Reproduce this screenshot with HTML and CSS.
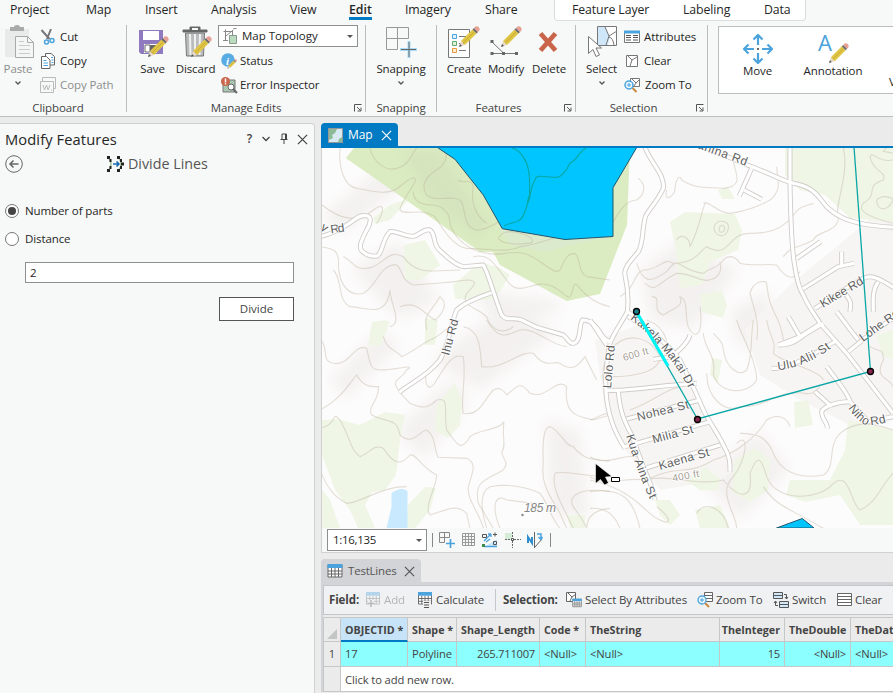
FILE: index.html
```html
<!DOCTYPE html>
<html lang="en">
<head>
<meta charset="utf-8">
<title>Modify Features</title>
<link rel="stylesheet" href="styles.css">
</head>
<body>
<svg class="sprite" aria-hidden="true">
  <defs>
    <symbol id="pencil" viewBox="0 0 22 22">
      <path d="M1 21l2-6 4 4z" fill="#e6d9cc"/><path d="M1 21l1-3 2 2z" fill="#555"/>
      <path d="M3 15L14.500 3.500l4 4L7 19z" fill="#dfc543"/><path d="M5 17L16.500 5.500" stroke="#c7ad38" stroke-width="1"/>
      <path d="M14.500 3.500l1.500-1.500 4 4-1.500 1.500z" fill="#6b6b6b"/><path d="M16 2l1.500-1.500q2-.8 3.300.7 1.400 1.500.6 3.200L20 6z" fill="#e8a094"/>
    </symbol>
    <symbol id="launcher" viewBox="0 0 8 8"><path d="M.5 7.500v-7h7M3 3l3.500 3.500M7 3.500V7H3.500" fill="none" stroke="#555"/></symbol>
    <symbol id="chev" viewBox="0 0 8 6"><path d="M1.500 1.500L4 4l2.500-2.500" fill="none" stroke="#555" stroke-width="1.300"/></symbol>
    <symbol id="x" viewBox="0 0 12 12"><path d="M1 1l10 10M11 1L1 11" fill="none" stroke="currentColor" stroke-width="1.300"/></symbol>
    <symbol id="tbl" viewBox="0 0 16 14"><path d="M1 1h14v12H1zM1 7h14M1 10h14M4.500 4v9M8 4v9M11.500 4v9" fill="#fff" stroke="#666"/><path d="M.5 0h15v4H.5z" fill="#4ba3de"/></symbol>
  </defs>
</svg>

<header class="ribbon">
  <nav class="tabs">
    <span>Project</span><span>Map</span><span>Insert</span><span>Analysis</span><span>View</span><span class="active"><b>Edit</b></span><span>Imagery</span><span>Share</span>
    <div class="context"><span>Feature Layer</span><span>Labeling</span><span>Data</span></div>
  </nav>
  <div class="groups">
    <section class="group clipboard">
      <div class="tools">
        <div class="big dim paste">
          <svg width="32" height="34" viewBox="0 0 32 34"><path d="M3 4h24v28H3z" fill="#e9ebea"/><path d="M8 2h4q0-2 3-2t3 2h4v4H8z" fill="#a9abab"/><path d="M13.500 11.500h12l6 6v15h-18z" fill="#f4f6f5" stroke="#a9abab"/><path d="M25.500 11.500v6h6" fill="none" stroke="#a9abab"/><path d="M17 16.500h5M17 20.500h11M17 24.500h11M17 28.500h11" stroke="#c9cccb"/></svg>
          <span>Paste</span><svg width="8" height="6"><use href="#chev"/></svg>
        </div>
        <div class="list">
          <div><svg width="16" height="16" viewBox="0 0 16 16"><path d="M1.500 1l8 9M11 0L7 10" stroke="#777" stroke-width="2"/><circle cx="6.500" cy="13" r="2" fill="none" stroke="#4ba3de" stroke-width="1.500"/><circle cx="12" cy="11.500" r="2" fill="none" stroke="#4ba3de" stroke-width="1.500"/></svg><span>Cut</span></div>
          <div><svg width="16" height="16" viewBox="0 0 16 16"><path d="M5.500.5H11l3.500 3v8.500h-9z" fill="#fff" stroke="#666"/><path d="M1.500 3.500h5l3.500 3.500v8.500H1.500z" fill="#fff" stroke="#666"/><path d="M3.500 7.500h3M3.500 10h4.500M3.500 12.500h4.500M11 4.500h2M11.500 7h2M11.500 9.500h2" stroke="#4ba3de"/></svg><span>Copy</span></div>
          <div class="dim"><svg width="16" height="16" viewBox="0 0 16 16"><path d="M2.500 4V.5h13v11H14M.5 4.500h13v11H.5z" fill="none" stroke="#b9bbba"/><path d="M3 8l1.500 5 2-5 1.500 5 2-5M11 13h1" fill="none" stroke="#b9bbba"/></svg><span>Copy Path</span></div>
        </div>
      </div>
      <footer><span>Clipboard</span></footer>
    </section>
    <section class="group manage">
      <div class="tools">
        <div class="big save">
          <svg width="32" height="34" viewBox="0 0 32 34"><path d="M2 5h24v24H4l-2-2z" fill="#8f79bf"/><path d="M6 6h16v9H6z" fill="#fff"/><path d="M7 19h13v9H7z" fill="#fff" /><path d="M8 20h5v7H8z" fill="#fff" stroke="#666"/><path d="M13 20h6v8h-6z" fill="#666"/><use href="#pencil" x="10" y="11" width="22" height="22"/></svg>
          <span>Save</span>
        </div>
        <div class="big discard">
          <svg width="32" height="34" viewBox="0 0 32 34"><path d="M3 5h24v2H3zM10 5V2h10v3" fill="#666" stroke="#666" /><path d="M12 3h6v2h-6z" fill="#f7f9f8"/><path d="M5.500 8h19l-1 23h-17z" fill="#b9bcbc" stroke="#777"/><path d="M10 9l.5 21M15 9v21M20 9l-.5 21" stroke="#f0f0f0" stroke-width="2"/><use href="#pencil" x="10" y="11" width="22" height="22"/></svg>
          <span>Discard</span>
        </div>
        <div class="list">
          <div class="combo"><svg width="18" height="17" viewBox="0 0 18 17"><path d="M2.500 3.500h9M4.500 1.500v11M2 12.500h5M11.500 2v6M12 1l4-1M5 8l6-5" fill="none" stroke="#888"/><path d="M8.500 7.500h7v8h-7z" fill="#b9dcc0" stroke="#8a9a8d"/></svg><span>Map Topology</span><i></i></div>
          <div><svg width="17" height="17" viewBox="0 0 17 17"><circle cx="7" cy="7" r="6.800" fill="#58ace4"/><text class="info" x="5" y="12">i</text><use href="#pencil" x="6" y="6" width="10" height="10"/></svg><span>Status</span></div>
          <div><svg width="17" height="17" viewBox="0 0 17 17"><path d="M2 3h12v12H2z" fill="#a8c8b0" stroke="#777"/><circle cx="4.500" cy="4.500" r="4.500" fill="#c9654a"/><path d="M4.500 1.500v4M4.500 6.300v1.200" stroke="#fff" stroke-width="1.500"/><circle cx="10" cy="10" r="3" fill="#fff" stroke="#666"/><path d="M12 12l4 4" stroke="#666" stroke-width="2"/></svg><span>Error Inspector</span></div>
        </div>
      </div>
      <footer><span>Manage Edits</span><svg width="8" height="8"><use href="#launcher"/></svg></footer>
    </section>
    <section class="group snapping">
      <div class="tools">
        <div class="big">
          <svg width="32" height="34" viewBox="0 0 32 34"><path d="M1.500 2.500h22v11h-22zM12.500 2.500v22h-11v-11" fill="none" stroke="#999"/><path d="M24 16v17M15 24.500h17" stroke="#a9dbf7" stroke-width="3"/><path d="M24 17v15M16 24.500h15" stroke="#666" stroke-width="1"/></svg>
          <span>Snapping</span><svg width="8" height="6"><use href="#chev"/></svg>
        </div>
      </div>
      <footer><span>Snapping</span></footer>
    </section>
    <section class="group features">
      <div class="tools">
        <div class="big create">
          <svg width="32" height="34" viewBox="0 0 32 34"><path d="M.5 4.500h21v28H.5z" fill="#fff" stroke="#777"/><path d="M4.500 9.500h4v4h-4z" fill="#e0f1fb" stroke="#4ba3de"/><path d="M4.500 16.500h4v4h-4z" fill="#dff1df" stroke="#62a868"/><path d="M4.500 23.500h4v4h-4z" fill="#fdebd3" stroke="#e79a3c"/><path d="M11 11.500h7M11 18.500h7M11 25.500h7" stroke="#777"/><use href="#pencil" x="10" y="1" width="22" height="22"/></svg>
          <span>Create</span>
        </div>
        <div class="big modify">
          <svg width="32" height="34" viewBox="0 0 32 34"><path d="M2 17l12 11.500M2 28.500h24" stroke="#777" fill="none"/><path d="M.500 15h3v3h-3zM.500 27h3v3h-3zM12 27h3v3h-3zM25 27h3v3h-3z" fill="#666"/><use href="#pencil" x="10" y="1" width="22" height="22"/></svg>
          <span>Modify</span>
        </div>
        <div class="big delete">
          <svg width="32" height="34" viewBox="0 0 32 34"><path d="M7.500 8.500l15 17M22.500 8.500l-15 17" stroke="#c9654a" stroke-width="4.800"/></svg>
          <span>Delete</span>
        </div>
      </div>
      <footer><span>Features</span><svg width="8" height="8"><use href="#launcher"/></svg></footer>
    </section>
    <section class="group selection">
      <div class="tools">
        <div class="big">
          <svg width="32" height="34" viewBox="0 0 32 34"><path d="M11.500 1.500h19v19h-19z" fill="#fff" stroke="#777"/><path d="M12 2h7l5 10-2 8H12z" fill="#cfe7f8"/><path d="M19 2l4 9-3 9M23 11l8-5M23 12q4 1 5 8" fill="none" stroke="#777"/><path d="M2.500 11.500v17l4.500-4 3 7 3.500-1.500-3.500-7h5.500z" fill="#fff" stroke="#777"/></svg>
          <span>Select</span><svg width="8" height="6"><use href="#chev"/></svg>
        </div>
        <div class="list">
          <div><svg width="16" height="16" viewBox="0 0 16 16"><path d="M.500 2.500h15v11H.500z" fill="#fff" stroke="#777"/><path d="M0 1.500h16v3H0z" fill="#4ba3de"/><path d="M2 6.500h5M2 8.500h5M2 11h5M9 6.500h5M9 8.500h5M9 11h5" stroke="#555"/></svg><span>Attributes</span></div>
          <div><svg width="16" height="16" viewBox="0 0 16 16"><path d="M2.500 2.500h11v11h-11zM4 3l4 4-2 6M8 7l5-3" fill="#fff" stroke="#777"/></svg><span>Clear</span></div>
          <div><svg width="17" height="16" viewBox="0 0 17 16"><path d="M6.500 1.500h9v8h-9z" fill="#fff" stroke="#777"/><path d="M8 2l4 4-2 3M12 6l3-3" fill="none" stroke="#777"/><path d="M8.500 11l4 4" stroke="#c98a3c" stroke-width="2"/><circle cx="5" cy="8" r="4" fill="#eaf6fd" stroke="#4ba3de" stroke-width="1.500"/><path d="M3 8h4M5 6v4" stroke="#4ba3de"/></svg><span>Zoom To</span></div>
        </div>
      </div>
      <footer><span>Selection</span><svg width="8" height="8"><use href="#launcher"/></svg></footer>
    </section>
    <div class="gallery">
      <div class="tile move"><svg width="30" height="30" viewBox="0 0 30 30"><path d="M15 1v10M15 19v10M1 15h10M19 15h10M10.500 5.500L15 1l4.500 4.500M10.500 24.500L15 29l4.500-4.500M5.500 10.500L1 15l4.500 4.500M24.500 10.500L29 15l-4.500 4.500" fill="none" stroke="#4ba3de" stroke-width="2.200"/><path d="M14 14h2v2h-2z" fill="#666"/></svg><span>Move</span></div>
      <div class="tile anno"><svg width="32" height="30" viewBox="0 0 32 30"><text class="bigA" x="1" y="17">A</text><use href="#pencil" x="11" y="9" width="21" height="21"/></svg><span>Annotation</span></div>
      <div class="tile cut"><span>V</span></div>
    </div>
  </div>
</header>

<main class="work">
  <aside class="pane">
    <div class="pane-title"><h1>Modify Features</h1>
      <div class="pane-btns"><span>?</span><svg width="10" height="8" viewBox="0 0 10 8"><path d="M1.500 2L5 5.500 8.500 2" fill="none" stroke="#444" stroke-width="1.300"/></svg><svg width="8" height="12" viewBox="0 0 8 12"><path d="M2 1h4.500v5.500M2 1v5.500M.5 6.500h7M4 7v4M5.500 1v5.500" fill="none" stroke="#444"/></svg><svg width="11" height="11"><use href="#x" width="11" height="11"/></svg></div>
    </div>
    <div class="pane-sub">
      <svg width="18" height="18" viewBox="0 0 18 18"><circle cx="9" cy="9" r="8.300" fill="none" stroke="#666"/><path d="M13.500 9H5M8.500 5.500L5 9l3.500 3.500" fill="none" stroke="#666" stroke-width="1.500"/></svg>
      <div class="tool-name"><svg width="17" height="16" viewBox="0 0 17 16"><path d="M2 2q4 6 0 12M12 2q4 6 0 12" fill="none" stroke="#a7c29a" stroke-width="1.500"/><path d="M0 0h3v3H0zM0 13h3v3H0zM10 0h3v3h-3zM10 13h3v3h-3zM2.500 3h2v3h-2zM2.500 10h2v3h-2zM13 3h2v3h-2zM13 10h2v3h-2zM14 6.500h3v3h-3z" fill="#222"/><path d="M6 8h6M9.500 5.500L12 8l-2.500 2.500" fill="none" stroke="#1565b0" stroke-width="1.500"/></svg><span>Divide Lines</span></div>
    </div>
    <label class="opt"><i class="radio on"></i>Number of parts</label>
    <label class="opt"><i class="radio"></i>Distance</label>
    <div class="field">2</div>
    <button class="go">Divide</button>
  </aside>

  <div class="right">
    <div class="mapview">
      <div class="tabbar"><div class="maptab"><svg width="15" height="15" viewBox="0 0 15 15"><path d="M.5.5h14v14H.5z" fill="#d9eaf5" stroke="#999"/><path d="M1 1h8l-2 4-3 2 1 3-4 2z" fill="#8dba96"/><path d="M10 14l1-3 3-2v5z" fill="#8dba96"/></svg><span>Map</span><svg width="11" height="11"><use href="#x" width="11" height="11"/></svg></div></div>
      <svg class="map" viewBox="322 148 571 380" width="571" height="380">
        <defs>
          <filter id="soft" x="-30%" y="-30%" width="160%" height="160%"><feGaussianBlur stdDeviation="7"/></filter>
          <g id="roads">
            <g transform="translate(320 120) scale(.33333)">
              <path d="M0 350C20 345 50 335 80 315C105 300 115 285 135 287C160 285 150 315 140 330C125 360 115 380 125 392C140 408 155 410 172 408C190 395 185 360 210 335C225 330 255 350 280 349C300 345 310 325 330 330C350 345 335 370 360 392C385 415 410 438 432 440L490 435C505 460 520 520 545 585C560 605 580 590 605 600L650 622L730 645C745 655 745 672 760 670C785 665 775 620 787 600C815 600 830 620 845 645C855 660 865 665 875 665"/>
              <path d="M515 518C480 530 430 550 410 570C395 600 390 670 360 720C320 770 270 790 238 817"/>
            </g>
            <g transform="translate(600 140) scale(.33333)">
              <path d="M130 10C150 70 195 100 190 145C170 190 135 220 135 235C125 280 130 310 115 335C90 365 70 385 75 405C85 450 85 490 82 515C70 540 40 580 30 610"/>
              <path d="M300 14C380 50 430 70 480 90C530 110 560 128 590 132C650 145 660 180 680 200C710 230 740 240 780 250C820 258 850 260 885 262"/>
              <path d="M570 10L570 130C572 240 575 320 583 370C590 420 600 450 610 465C630 510 650 530 660 550L740 640L879 820"/>
              <path d="M455 85L418 168M432 150L485 178M590 355L662 305M608 447L715 380L762 370M725 335V378M645 505C700 470 760 430 790 415C820 400 850 425 885 445M835 425C815 450 820 490 820 515M735 460C760 490 750 500 750 515M662 550L600 590L535 615M600 590L565 530M710 515C730 540 750 570 775 600M745 635L800 590L885 530M82 515L105 530"/>
            </g>
            <g transform="translate(590 320) scale(.33333)">
              <path d="M115-10C180 30 240 80 270 120C300 180 320 220 340 270C360 310 390 350 405 385C420 410 420 430 420 455M60 70C50 120 45 180 48 215C52 280 75 340 105 385M0 0L50 75M48 212L100 210C170 205 230 195 320 190M85 215C90 270 100 300 125 345L160 440C170 470 190 500 195 540M110 297L330 240M105 380L360 305M165 445L390 375"/>
              <path d="M565 75C610 75 620 60 650 40L700 10M545 145C600 150 690 90 735 65M710 140C740 180 775 220 780 245C740 245 700 260 695 275C695 300 715 310 712 325M675 215L725 260M780 245L835 305L909 290M300 45C290 80 260 90 250 110M190 118L235 112"/>
            </g>
          </g>
          <path id="p-kakela" d="M630 319Q650 334 667 355Q680 371 690 391"/>
          <path id="p-niho" d="M848 408Q858 422 866 425Q876 426 894 420"/>
          <path id="p-kua" d="M626 436Q635 466 651 502"/>
          <path id="p-ulu" d="M778 370Q805 368 834 346"/>
        </defs>
        <rect x="322" y="148" width="571" height="380" fill="#fdfcfc"/>
        <g class="shade" filter="url(#soft)">
          <path d="M322 215L385 165L400 190L340 235Z"/><path d="M350 270L400 240L440 300L400 320Z"/><path d="M330 380L380 330L400 345L345 400Z"/><path d="M395 430L450 380L470 400L425 460Z"/><path d="M545 420L580 430L590 520L550 515Z"/><path d="M640 270L680 240L740 270L690 330L650 320Z"/><path d="M430 360L500 310L560 330L480 390Z"/><path d="M730 310L770 290L770 360L735 340Z"/><path d="M700 480L760 430L790 470L740 520Z"/><path d="M470 290L560 300L560 310L500 330Z"/>
        </g>
        <path d="M595 340L640 325L690 385L735 470L720 480L660 490L625 450L605 410ZM745 330L790 285L893 200V420L860 430L800 400L760 375Z" class="town"/>
        <g class="wood">
          <path d="M322 420L338 419 360 425 385 412 405 415 400 440 396 475 385 490 372 492 365 505 375 528H358L350 510 335 490 322 455ZM322 490L330 500 340 528H322ZM408 505L425 487 436 488 430 510 415 528H405ZM437 405L455 383 462 400 460 425 448 438 435 430ZM372 322L385 320 390 322 380 346 368 345ZM425 318L438 320 435 345 425 345ZM404 245L425 240 440 265 420 280 405 280ZM373 218L390 205 410 198 390 220 375 224Z"/>
          <path d="M453 285L480 262 500 268 510 275 495 300 455 299ZM670 222L685 212 735 214 742 230 738 250 710 262 702 285 680 288 676 250ZM700 295L722 290 727 305 723 318 702 312ZM718 190L728 187 735 199 722 199ZM785 148H893V222L850 218 825 195 800 190 785 175ZM794 402L808 400 813 425 795 428ZM848 420L893 430V525L860 525 840 495 805 502 786 495 790 480 830 480 845 450ZM735 460L755 448 770 460 768 490 750 502 732 492ZM685 480L705 467 720 478 718 490 700 490ZM655 500L670 500 680 515 670 525 660 515ZM695 510L720 505 730 528H700ZM877 335L893 330V360L882 355ZM712 358L722 360 718 383 710 375ZM567 515L585 515 585 528H570Z"/>
        </g>
        <path d="M354 148L345.700 158L480 251.700L493 252L500 265L566.700 301L600 294L627 225L630 148Z" class="forest"/>
        <path class="forest-shade" filter="url(#soft)" d="M400 150L440 150L490 225L480 240L430 200Z"/>
        <path d="M498 225L510 245 545 252 580 243 613 236V188L636 148H500Z" fill="#dbe8cf" opacity=".8"/>
        <g class="contours">
          <g transform="translate(320 120) scale(.33333)">
            <path d="M60 84C55 150 75 200 110 205C160 215 210 230 245 195C270 175 290 165 285 185C270 215 240 250 240 270C260 290 300 260 345 290C370 330 400 380 440 385C500 385 560 400 600 380C680 370 720 330 870 340"/>
            <path d="M150 84C160 130 200 155 230 145C270 135 275 100 290 84M370 84C385 105 380 130 350 150C300 180 310 210 320 225C350 250 400 220 425 245C440 290 430 320 470 330C510 330 530 300 560 300M415 180C430 195 450 170 460 200C450 250 470 290 500 310M280 215C280 240 300 255 340 255C380 260 390 290 390 310C400 350 440 390 500 400C540 410 570 390 610 400C660 410 700 470 720 450C735 420 740 400 765 400C785 420 770 450 800 470L870 480"/>
            <path d="M0 250C60 300 110 310 160 270C200 240 190 280 170 310M0 380C40 385 60 390 55 440C60 500 90 530 130 520C170 500 180 430 230 435C250 450 240 480 280 495C340 490 380 490 440 480C480 480 460 500 440 520C420 560 470 560 500 590C510 620 540 650 580 620M70 410C100 420 100 460 160 440C200 420 210 390 250 410C290 470 350 450 420 450M460 410C510 400 520 430 560 480C600 540 640 470 700 500C740 520 750 560 760 500C770 470 780 540 870 560M40 450C70 480 50 540 90 560C130 560 200 600 210 510C210 550 250 610 210 620M320 630C310 580 330 580 360 530C385 550 370 580 345 600C310 580 290 540 240 560M535 355C545 335 570 330 600 340C640 350 650 370 620 370C580 375 545 370 535 355"/>
          </g>
          <g transform="translate(320 320) scale(.33333)">
            <path d="M0 55C30 90 0 120 40 130C90 140 100 70 140 85C150 130 150 150 180 150C230 150 290 130 260 150C240 190 190 170 270 250C310 270 330 260 350 240C390 230 370 270 380 330C410 370 420 400 450 350C470 330 540 330 552 305C545 350 560 380 545 395C550 430 570 420 550 450C500 480 460 480 475 550L520 625"/>
            <path d="M0 270C60 240 80 200 110 165C130 200 150 200 175 200C180 240 140 260 155 285C200 310 230 290 240 345C280 380 300 330 320 330C350 350 340 390 355 412L440 415C470 430 460 450 445 500C440 540 480 580 490 625M0 325C60 310 30 270 60 300C90 350 90 390 120 410C150 400 160 370 190 385C220 430 240 440 270 405C290 400 300 440 350 465C350 500 310 560 330 585C380 570 410 550 440 580L450 625M0 450C20 500 40 530 80 550C120 550 180 500 260 500"/>
            <path d="M320 150C310 200 330 220 350 180C380 130 400 100 430 110C440 180 420 240 430 280C480 290 490 240 520 210C540 200 550 210 560 225C590 200 600 180 630 220C680 240 710 170 740 200C730 290 780 290 820 300L870 285M430 20C480 30 480 80 485 140C550 150 600 90 640 100C680 150 700 120 720 130C760 160 780 130 795 110L830 180M670 430C665 330 680 310 700 325C730 350 740 380 760 380C790 420 820 420 870 423M500 625C490 590 470 520 510 500C560 490 620 500 660 520C690 560 690 590 720 625M540 625C510 550 530 520 560 540L640 550M670 430C660 500 700 540 720 580L740 625M870 470C800 470 720 450 705 460C690 500 730 560 760 625M870 515C780 500 740 530 760 560C780 590 790 600 800 625M870 565C820 570 800 590 800 625M190 50C200 90 230 90 245 110C290 90 290 80 330 60C360 50 380 20 420 0M500 0C540 70 570 40 600 30C640 20 700 80 740 80"/>
          </g>
          <g transform="translate(600 140) scale(.33333)">
            <path d="M40 245C60 210 80 180 110 180C140 160 135 130 115 115M200 150C190 190 220 170 225 150C225 120 240 100 245 120C290 150 330 140 370 145C440 140 400 90 400 60M310 190C330 180 350 220 390 220C460 210 510 180 510 180C550 150 530 110 530 80M60 470C110 440 100 400 130 390C180 390 190 350 220 370C290 370 300 330 320 320C390 360 380 280 450 280C540 280 550 250 570 240C600 190 620 200 640 190M230 300C240 280 270 290 270 320C300 260 300 230 315 190M110 370C130 430 150 430 200 395C240 340 230 390 310 400C330 380 350 390 370 360C380 350 400 340 420 370C460 380 500 370 530 375C560 420 580 420 600 395M135 430C170 460 170 430 230 400C290 400 310 440 350 410C370 390 360 370 360 365M342 260C350 235 390 240 385 265C380 300 340 290 342 260M358 265C360 250 375 255 374 268C370 280 355 280 358 265M155 470C190 470 150 510 190 525C230 500 250 500 240 470C270 480 250 550 270 570C290 600 310 580 300 500M200 600C190 570 170 550 140 540M470 600C480 550 460 500 450 460C460 420 500 420 500 430C510 530 540 520 550 600M730 24C750 100 700 210 715 225C720 280 650 270 640 300C590 330 580 310 550 350M879 60C830 70 820 30 810 50C820 100 860 90 850 120C790 140 840 160 790 190C770 210 800 230 879 250M830 180C850 160 879 175 879 180C860 220 830 210 830 180M879 40C850 30 840 40 860 24"/>
          </g>
          <g transform="translate(590 320) scale(.33333)">
            <path d="M50 60C60 130 30 130 40 180M60 90C110 30 180 50 210 110C210 150 150 170 60 170M0 300C30 290 40 280 50 280M120 270C200 240 220 210 270 200M340 40C340 80 380 110 370 160C380 220 470 230 500 180C500 120 450 40 440 0M370 40C390 60 400 70 400 90C410 150 450 170 470 150C490 100 480 60 490 0M350 160C350 230 400 280 450 260C530 260 560 220 600 220C660 210 650 240 690 200M0 410C60 440 90 400 150 410M0 470C50 500 110 470 170 480C270 430 290 470 370 420C440 400 500 350 530 300C560 280 590 290 600 320M450 340C500 340 530 350 550 400C570 450 620 480 700 465C740 440 710 380 750 340C800 300 850 310 909 330M160 480C230 460 320 500 400 480C450 540 490 540 480 460C500 410 510 400 530 470C560 550 690 540 730 490C780 450 780 550 810 570C860 550 870 500 909 460M440 370C480 330 470 420 430 470C380 520 440 580 440 625M520 500C560 560 590 560 700 625M0 515C100 500 130 540 150 625M200 560C240 590 250 620 210 600C170 590 140 510 0 480M320 580C340 540 400 560 415 625M0 565C60 560 80 600 90 625M530 0C540 60 560 60 550 100C580 130 690 150 700 180M840 80C870 100 880 80 880 120C850 180 900 170 909 200"/>
          </g>
        </g>
        <use href="#roads" class="casing"/><use href="#roads" class="core"/>
        <path d="M391.500 493Q402 486 407.500 491V528H386.500L391.500 507Z" fill="#c8e9fe"/>
        <g class="lake">
          <path d="M436.700 147L455 159.300L483.300 195L502.300 228.700L565 239.500L613 236.500V187.700L637 147Z"/>
          <path d="M776.500 528L802.300 518.500L814 528Z"/>
        </g>
        <path class="creek" d="M511.700 148C518 149 520 153 523 156.700C530 166 530 180 529.500 195C527 200 528 207 525 211C521 226 510 221 504 226M586 148C578 152 577 161 570 163C565 174 560 177 556.700 177.300C548 178 536 173 535 180C530 188 531 196 528 203"/>
        <g class="labels">
          <text x="331" y="233.500" transform="rotate(-8 331 233)" textLength="14">Rd</text>
          <text x="320" y="229" transform="rotate(35 320 229)">y</text>
          <text transform="translate(449 356) rotate(-75)" textLength="37">Ihu Rd</text>
          <text transform="translate(611 388.500) rotate(-85)" textLength="43">Lolo Rd</text>
          <text transform="translate(697 148) rotate(20)" textLength="52">anina Rd</text>
          <text transform="translate(823 308) rotate(-31)" textLength="48">Kikee Rd</text>
          <text transform="translate(863 342) rotate(-36)" textLength="46">Lohe Rd</text>
          <text><textPath href="#p-kakela" textLength="92">Kakela Makai Dr</textPath></text>
          <text transform="translate(638 421) rotate(-14)" textLength="53">Nohea St</text>
          <text transform="translate(653.500 443.500) rotate(-15)" textLength="42">Milia St</text>
          <text transform="translate(660 470) rotate(-16)" textLength="52">Kaena St</text>
          <text><textPath href="#p-kua" textLength="68">Kua Aina St</textPath></text>
          <text><textPath href="#p-ulu" textLength="58">Ulu Alii St</textPath></text>
          <text><textPath href="#p-niho" textLength="46">Niho Rd</textPath></text>
          <text class="ht" transform="translate(624 361) rotate(-16)" textLength="26">600 ft</text>
          <text class="ht" transform="translate(673 481.500) rotate(-10)" textLength="27">400 ft</text>
          <text class="peak" x="524" y="512" textLength="32">185 m</text>
        </g>
        <circle cx="522.500" cy="515" r="1.200" fill="#888"/>
        <path d="M854 147L870.500 371.500L697.500 419L636.500 312" fill="none" stroke="#0aa6a6" stroke-width="1.300"/>
        <path d="M636.500 312L668 366" stroke="#00f4f4" stroke-width="3.200"/>
        <g stroke="#000" stroke-width="1.300"><circle cx="636.500" cy="311.500" r="3" fill="#197e86"/><circle cx="697.500" cy="419.500" r="3" fill="#86264f"/><circle cx="870.500" cy="371.500" r="3" fill="#86264f"/></g>
        <path d="M595.500 463.500V483.500L600.500 479.500L604.500 485L608.500 483L605.500 477L612 476.500Z" fill="#000" stroke="#fff" stroke-width=".6"/>
        <path d="M611.500 477.500h8v4h-8z" fill="#fff" stroke="#000"/>
      </svg>
      <div class="statusbar">
        <div class="scale"><span>1:16,135</span><i></i></div><b class="bar"></b>
        <svg width="16" height="16" viewBox="0 0 16 16"><path d="M.5.5h10v5H.5zM5.500.5v10h-5v-5" fill="none" stroke="#888"/><path d="M11.500 7v9M7 11.500h9" stroke="#4ba3de" stroke-width="1.700"/></svg>
        <svg width="14" height="14" viewBox="0 0 14 14"><path d="M.5.5h12v12H.5zM.5 3.500h12M.5 6.500h12M.5 9.500h12M3.500.5v12M6.500.5v12M9.500.5v12" fill="none" stroke="#999"/></svg>
        <svg width="16" height="16" viewBox="0 0 16 16"><path d="M4 14h11V7z" fill="#cde8fa"/><path d="M.5 2.500h4v3h-4zM11.500 9.500h3v3h-3zM11 2.500h4M13 .5v4" fill="none" stroke="#555"/><path d="M2 9l7-7M9 2v3M9 2H6M4 10l4-3M2 14.500h13" stroke="#4ba3de" stroke-width="1.300"/><path d="M0 12h3v3H0z" fill="#3d8b4b"/></svg>
        <svg width="16" height="16" viewBox="0 0 16 16"><path d="M0 1h7v7H0z" fill="#d5ecd8"/><path d="M7.500 0v16M0 7.500h16" stroke="#666" stroke-dasharray="2 1"/><path d="M6.500 6.500h2v2h-2z" fill="#fff" stroke="#555"/></svg>
        <svg width="16" height="16" viewBox="0 0 16 16"><path d="M1 11V5l4 6V5" fill="none" stroke="#318fd0" stroke-width="2"/><path d="M7.500 0v16M8 15l7-8" stroke="#666"/><path d="M10 2h4v5M11.500 5L14 7.500 15.500 5" fill="none" stroke="#4ba3de" stroke-width="1.500"/></svg>
        <b class="bar"></b>
      </div>
    </div>

    <div class="tableview">
      <div class="tbltab"><svg width="16" height="14"><use href="#tbl" width="16" height="14"/></svg><span>TestLines</span><svg width="11" height="11"><use href="#x" width="11" height="11"/></svg></div>
      <div class="tblbody">
        <div class="tbltools">
          <strong class="t1">Field:</strong>
          <span class="cmd t2 off"><svg width="16" height="16" viewBox="0 0 16 16"><use href="#tbl" y="0" width="16" height="13"/><path d="M3 8h6v6H3z" fill="#eee"/><path d="M6 8v7M2.500 11.500h7" stroke="#555" stroke-width="1.500"/></svg>Add</span>
          <span class="cmd t3"><svg width="16" height="16" viewBox="0 0 16 16"><use href="#tbl" width="16" height="13"/><path d="M6 9h8v7H6z" fill="#eee"/><path d="M7 10.500h5M7 13h5M7 15.500h5" stroke="#555" stroke-width="1.200"/></svg>Calculate</span>
          <b class="sep"></b>
          <strong class="t4">Selection:</strong>
          <span class="cmd t5"><svg width="16" height="16" viewBox="0 0 16 16"><path d="M.5.5h9v9h-9z" fill="#fff" stroke="#666"/><path d="M2 1l4 4-2 4M6 5l4-3" fill="none" stroke="#666"/><use href="#tbl" x="6" y="6" width="10" height="10"/></svg>Select By Attributes</span>
          <span class="cmd t6"><svg width="16" height="16" viewBox="0 0 16 16"><path d="M7.500.5h8v9h-8zM8 3.500h7M8 6.500h7" fill="#fff" stroke="#666"/><path d="M8 11l4 4" stroke="#c98a3c" stroke-width="2"/><circle cx="5" cy="8" r="4" fill="#eaf6fd" stroke="#4ba3de" stroke-width="1.300"/><path d="M3 8h4M5 6v4" stroke="#4ba3de"/></svg>Zoom To</span>
          <span class="cmd t7"><svg width="16" height="16" viewBox="0 0 16 16"><path d="M.5.5h9v6h-9zM.5 3.500h9M6.500 9.500h9v6h-9zM6.500 12.500h9" fill="#cfe7f8" stroke="#555"/><path d="M11 2.500h2.500V7M12 5l1.500 2L15 5M5 13.500H2.500V9M1 11l1.500-2L4 11" fill="none" stroke="#555"/></svg>Switch</span>
          <span class="cmd t8"><svg width="15" height="14" viewBox="0 0 15 14"><path d="M.5.5h14v12H.5zM.5 3.500h14M.5 6.500h14M.5 9.500h14" fill="#fff" stroke="#666"/></svg>Clear</span>
        </div>
        <div class="grid">
          <span class="h corner"><i></i></span><span class="h sorted">OBJECTID *</span><span class="h">Shape *</span><span class="h">Shape_Length</span><span class="h">Code *</span><span class="h">TheString</span><span class="h num">TheInteger</span><span class="h">TheDouble</span><span class="h">TheDate</span>
          <span class="r rowno">1</span><span class="r">17</span><span class="r">Polyline</span><span class="r num">265.711007</span><span class="r">&lt;Null&gt;</span><span class="r">&lt;Null&gt;</span><span class="r num">15</span><span class="r num">&lt;Null&gt;</span><span class="r">&lt;Null&gt;</span>
          <span class="rowno"></span><span class="newrow">Click to add new row.</span>
        </div>
      </div>
    </div>
  </div>
</main>
</body>
</html>
```
FILE: styles.css
```css
* { box-sizing: border-box; }
body {
  margin: 0; width: 893px; height: 693px; overflow: hidden;
  background: #ebebeb; color: #262626;
  font: 11.5px/16px "Open Sans", "Noto Sans", sans-serif;
  letter-spacing: -0.1px;
  white-space: nowrap;
}
svg { display: block; flex: none; }
.sprite { display: none; }

.ribbon { height: 117px; background: #f7f9f8; border-bottom: 1px solid #bcbfbf; overflow: hidden; }
.tabs {
  display: grid; height: 21px; font-size: 12.3px; line-height: 20px;
  grid-template-columns: 76px 59px 66px 79px 59px 56px 80px 69px 252px;
  padding-left: 10px; letter-spacing: -0.1px;
}
.tabs .active b { display: inline-block; height: 20px; border-bottom: 3px solid #007ac2; font-weight: 600; letter-spacing: 0; }
.context {
  display: grid; grid-template-columns: 111px 81px 1fr; padding-left: 17px;
  background: #fff; border: 1px solid #dcdede; border-top: 0; border-radius: 0 0 4px 4px;
}

.groups { display: flex; padding-top: 4px; }
.group { flex: none; height: 87px; border-right: 1px solid #bcbebe; display: flex; flex-direction: column; }
.clipboard { width: 127px; }
.manage { width: 239px; }
.snapping { width: 71px; }
.features { width: 139px; }
.selection { width: 132px; }
.tools { display: flex; flex: none; height: 75px; }
.group footer { display: flex; flex: none; height: 16px; align-items: center; justify-content: center; color: #444; position: relative; }
.group footer svg { position: absolute; right: 3px; bottom: 4px; }
.clipboard footer { padding-right: 10px; }
.selection footer { padding-right: 16px; }
.features footer { padding-right: 15px; }
.big { display: flex; flex-direction: column; align-items: center; }
.big span { margin-top: 2px; }
.big > svg:last-child { margin-top: 3px; }
.paste { width: 36px; }
.save { width: 51px; }
.discard { width: 35px; margin-right: 5px; }
.snapping .big { width: 70px; }
.create { width: 34px; margin-left: 10px; }
.modify { width: 50px; }
.delete { width: 36px; }
.selection .big { width: 48px; padding-left: 3px; }
.dim { color: #8c8e8e; }
.list > div { display: flex; align-items: center; gap: 4px; height: 24px; }
.paste + .list { margin-left: 4px; }
.manage .list > div { padding-left: 3px; gap: 2px; }
.manage .list .combo { width: 140px; height: 22px; margin: 0 0 2px; border: 1px solid #8e9090; background: #fff; gap: 3px; padding: 0 4px 0 2px; letter-spacing: 0; }
.combo i, .scale i { margin-left: auto; border: 3px solid transparent; border-top: 3px solid #555; border-bottom: 0; }
.info { font: italic bold 11px "Liberation Serif", serif; fill: #fff; }
.gallery { display: flex; margin: 1px 0 0 10px; width: 180px; height: 68px; flex: none; border: 1px solid #bcbebe; background: #fff; }
.tile { display: flex; flex-direction: column; align-items: center; padding-top: 7px; flex: none; }
.tile span { margin-top: -1px; }
.tile.move { width: 77px; }
.tile.anno { width: 74px; }
.tile.cut { padding: 48px 0 0 19px; }
.bigA { font: 500 22px "Open Sans", sans-serif; fill: #4ba3de; }

.work { display: flex; height: 576px; padding-top: 6px; }
.pane { width: 315px; height: 580px; margin-right: 6px; background: #f7f9f8; border: 1px solid #d0d2d2; border-left: 0; border-top-right-radius: 4px; padding: 3px 6px 0 5px; flex: none; }
.pane-title { display: flex; justify-content: space-between; height: 24px; align-items: center; }
h1 { margin: 0; font: 400 14.700px/24px "Open Sans", sans-serif; letter-spacing: 0.1px; }
.pane-btns { display: flex; align-items: center; gap: 9px; color: #444; }
.pane-btns span { font-weight: 600; font-size: 12px; }
.pane-sub { display: flex; height: 26px; align-items: center; color: #555; font-size: 14.300px; letter-spacing: 0; }
.tool-name { display: flex; align-items: center; gap: 4px; margin-left: 84px; }
.opt { display: flex; height: 28px; align-items: center; gap: 6px; }
.pane-sub + .opt { margin-top: 20px; }
.radio { width: 14px; height: 14px; border: 1px solid #777; border-radius: 50%; background: #fff; display: grid; place-items: center; }
.radio.on::after { content: ""; width: 8px; height: 8px; border-radius: 50%; background: #444; }
.field { width: 269px; height: 21px; margin: 9px 0 0 20px; padding: 2px 4px; border: 1px solid #8e9090; background: #fff; }
.go { display: block; width: 75px; height: 24px; margin: 14px 0 0 214px; padding: 0; font: inherit; color: #444; background: #fff; border: 1px solid #555; }

.right { width: 572px; flex: none; }
.mapview { height: 430px; border: 1px solid #d0d2d2; border-width: 0 0 1px 1px; background: #f7f9f8; }
.tabbar { background: #ebebeb; height: 25px; border-bottom: 2px solid #007ac2; margin-left: -1px; }
.maptab { width: 77px; height: 24px; display: flex; align-items: center; gap: 5px; padding-left: 7px; background: #007ac2; color: #fff; border-radius: 4px 4px 0 0; font-size: 12px; }
.maptab svg:last-child { margin-left: 3px; }
.statusbar { display: flex; align-items: center; height: 24px; padding-left: 5px; gap: 6.5px; }
.scale { display: flex; align-items: center; width: 100px; height: 22px; margin-right: -2px; padding: 0 4px 0 5px; border: 1px solid #8e9090; background: #fff; letter-spacing: -0.3px; }
.bar { width: 1px; height: 14px; background: #888; }
.tableview { margin-top: 6px; }
.tbltab { display: flex; align-items: center; width: 100px; height: 23px; gap: 5px; padding: 1px 0 0 6px; background: #d3d4d8; border-radius: 4px 4px 0 0; color: #555; letter-spacing: -0.2px; }
.tbltab svg:last-child { margin-left: 3px; }
.tblbody { border: 2px solid #d3d4d8; border-width: 3px 0 0 2px; }
.tbltools { display: flex; height: 30px; align-items: center; border: 1px solid #c3c5c8; border-right: 0; background: #f0f1f3; color: #444; padding-left: 5px; }
.tbltools strong { font-weight: 700; }
.cmd { display: flex; align-items: center; gap: 3px; flex: none; }
.t1 { width: 36px; }
.t2 { width: 52px; }
.t3 { width: 78px; }
.t4 { width: 63px; }
.t5 { width: 131px; }
.t6 { width: 76px; }
.t7 { width: 64px; }
.off { opacity: .35; }
.sep { width: 1px; height: 22px; margin-right: 7px; background: #c5c7ca; }
.grid {
  display: grid; margin-top: 2px; border: 1px solid #c6c8c8; border-width: 1px 0 0 1px; color: #444;
  grid-template-columns: 17px 67px 49px 83px 46px 134px 65px 66px 60px; grid-template-rows: 24px 25px 25px;
  font-size: 11.200px;
}
.grid > span { border: 1px solid #c6c8c8; border-width: 0 1px 1px 0; padding-left: 4px; line-height: 23px; overflow: hidden; }
.grid .h { background: #ebebeb; font-weight: 700; font-size: 10.700px; line-height: 25px; letter-spacing: 0; }
.grid .sorted { background: #c7e3f7; border-bottom: 2px solid #007ac2; }
.grid .r { background: #8cffff; }
.grid .num { text-align: right; padding: 0 4px 0 0; }
.grid .r.num { letter-spacing: -0.25px; }
.grid .rowno { background: #ebebeb; text-align: center; padding: 0; }
.grid .newrow { grid-column: 2 / 10; background: #fff; line-height: 26px; }
.corner i { display: block; width: 10px; height: 10px; margin: 11px 0 0 -1px; background: #c3c5c5; clip-path: polygon(100% 0, 100% 100%, 0 100%); }

.forest { fill: #d9ebbf; opacity: .95; }
.forest-shade { fill: #cfdcb8; opacity: .5; }
.wood { fill: #eff6e6; }
.town { fill: #f7f5f3; }
.shade { fill: #ebe8e6; opacity: .55; }
.contours { fill: none; stroke: #b8aa94; stroke-opacity: .36; stroke-width: 3.300; }
.casing, .core { fill: none; stroke-linejoin: round; }
.casing { stroke: #d0ccca; stroke-width: 15; }
.core { stroke: #fff; stroke-width: 9.500; }
.lake { fill: #00c5ff; stroke: #24566b; stroke-width: 1; }
.creek { fill: none; stroke: #0aa79f; stroke-width: 1.100; }
.labels { font: 12px "Liberation Sans", sans-serif; letter-spacing: 0; fill: #5f5f5f; stroke: #fff; stroke-width: 2px; stroke-opacity: .85; paint-order: stroke; }
.labels .ht { font-size: 10px; fill: #a39c93; }
.labels .peak { font-style: italic; font-size: 12px; fill: #858585; }
```
